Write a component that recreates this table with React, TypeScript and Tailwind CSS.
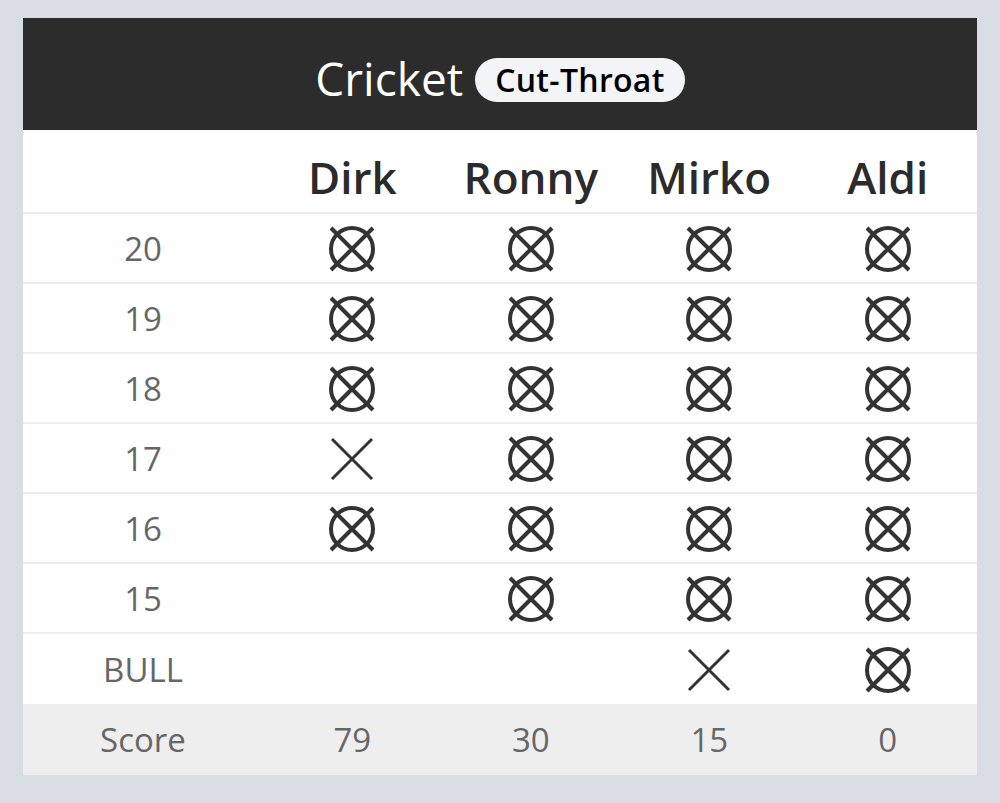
import React from "react";

type Mark = 0 | 1 | 2;

const players = ["Dirk", "Ronny", "Mirko", "Aldi"];
const rows: { label: string; marks: Mark[] }[] = [
  { label: "20", marks: [2, 2, 2, 2] },
  { label: "19", marks: [2, 2, 2, 2] },
  { label: "18", marks: [2, 2, 2, 2] },
  { label: "17", marks: [1, 2, 2, 2] },
  { label: "16", marks: [2, 2, 2, 2] },
  { label: "15", marks: [0, 2, 2, 2] },
  { label: "BULL", marks: [0, 0, 1, 2] },
];
const scores = ["79", "30", "15", "0"];

function MarkIcon({ m }: { m: Mark }) {
  if (m === 0) return null;
  if (m === 1)
    return (
      <svg width="48" height="48" viewBox="0 0 48 48">
        <line x1="4" y1="4" x2="44" y2="44" stroke="#333" strokeWidth="3" />
        <line x1="44" y1="4" x2="4" y2="44" stroke="#333" strokeWidth="3" />
      </svg>
    );
  return (
    <svg width="48" height="48" viewBox="0 0 48 48">
      <circle cx="24" cy="24" r="21" fill="none" stroke="#333" strokeWidth="4" />
      <line x1="3" y1="3" x2="45" y2="45" stroke="#333" strokeWidth="4" />
      <line x1="45" y1="3" x2="3" y2="45" stroke="#333" strokeWidth="4" />
    </svg>
  );
}

export default function App() {
  return (
    <div
      className="w-[1000px] h-[803px] bg-[#d7dde2] pt-[18px] pl-[23px]"
      style={{ fontFamily: "'Open Sans', 'Noto Sans', sans-serif" }}
    >
      <div className="w-[954px] bg-white flex flex-col">
        <div className="h-[112px] bg-[#2c2c2c] flex items-center justify-center gap-[12px] pt-[8px]">
          <span className="text-white text-[46px] leading-none">Cricket</span>
          <span className="bg-[#f3f4f8] text-black rounded-full text-[32px] font-semibold leading-none h-[44px] px-[20px] flex items-center mt-[4px] tracking-[0.3px]">
            Cut-Throat
          </span>
        </div>
        <div className="grid grid-cols-[240px_1fr_1fr_1fr_1fr] h-[84px] border-b-2 border-[#ececec] items-center">
          <div />
          {players.map((p) => (
            <div
              key={p}
              className="text-center text-[44px] font-semibold text-[#2b2b2b] leading-none pt-[12px]"
            >
              {p}
            </div>
          ))}
        </div>
        {rows.map((r, i) => (
          <div
            key={r.label}
            className={
              "grid grid-cols-[240px_1fr_1fr_1fr_1fr] items-center h-[70px] " +
              (i < rows.length - 1 ? "border-b-2 border-[#ececec]" : "")
            }
          >
            <div className="text-center text-[33px] text-[#666] pt-[2px]">{r.label}</div>
            {r.marks.map((m, j) => (
              <div key={j} className="flex items-center justify-center pt-[2px]">
                <MarkIcon m={m} />
              </div>
            ))}
          </div>
        ))}
        <div className="grid grid-cols-[240px_1fr_1fr_1fr_1fr] items-center h-[71px] bg-[#eeeeee]">
          <div className="text-center text-[33px] text-[#666]">Score</div>
          {scores.map((s, j) => (
            <div key={j} className="text-center text-[33px] text-[#666]">
              {s}
            </div>
          ))}
        </div>
      </div>
    </div>
  );
}
